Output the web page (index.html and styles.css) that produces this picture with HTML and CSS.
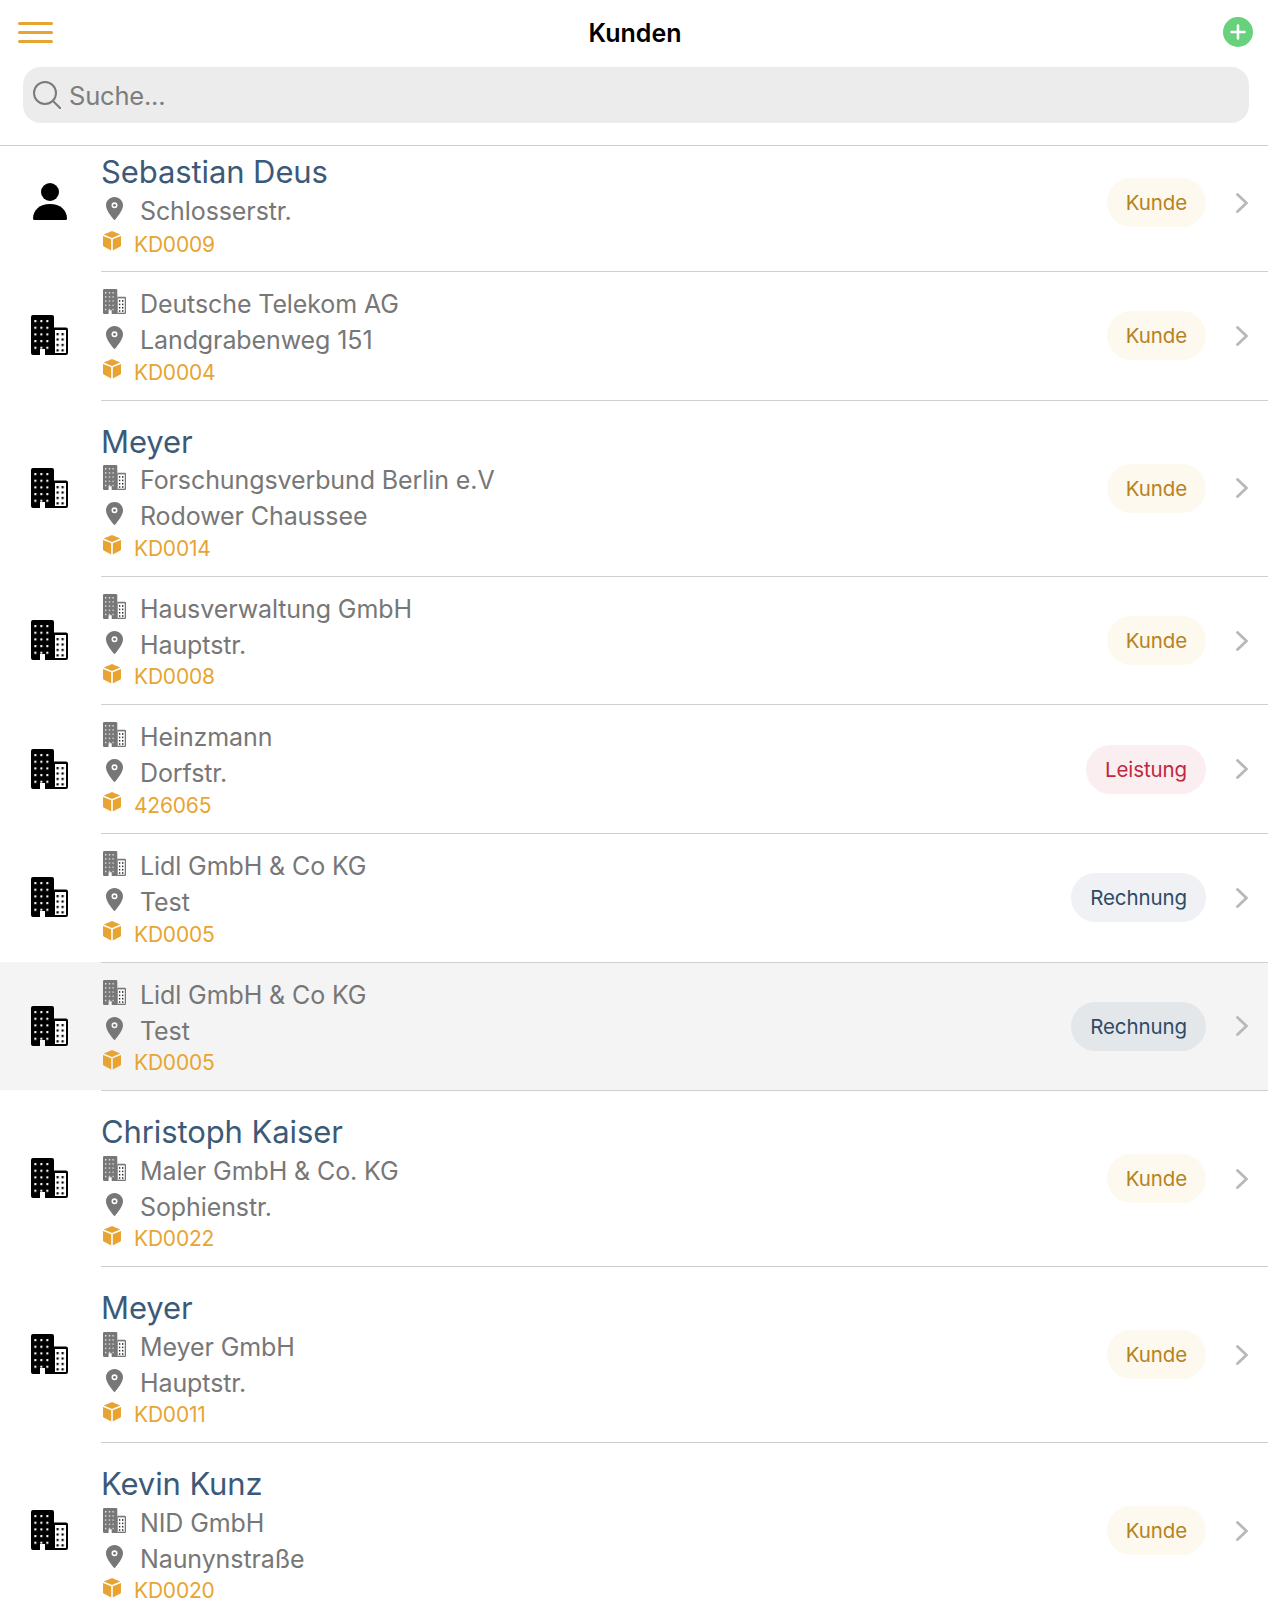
FILE: index.html
```html
<!DOCTYPE html>
<html lang="de">
<head>
<meta charset="utf-8">
<title>Kunden</title>
<link rel="stylesheet" href="styles.css">
</head>
<body>
<svg class="sprite" aria-hidden="true">
  <defs>
    <pattern id="win-a" x="3.300" y="5" width="6" height="6.670" patternUnits="userSpaceOnUse"><rect width="2.100" height="2.100" rx=".5" fill="#fff"/></pattern>
    <pattern id="win-b" x="25.500" y="18" width="5" height="5.400" patternUnits="userSpaceOnUse"><rect width="2.200" height="2.200" rx=".5" fill="#000"/></pattern>
    <symbol id="i-building" viewBox="0 0 37 40">
      <path d="M2 0h19a2 2 0 0 1 2 2v38h-9v-6h-5v6H2a2 2 0 0 1-2-2V2a2 2 0 0 1 2-2z"/>
      <path d="M23 12.500h12a2 2 0 0 1 2 2V38a2 2 0 0 1-2 2H23z"/>
      <rect x="24" y="15" width="11" height="23" fill="#fff"/>
      <rect x="3" y="4" width="15" height="31" fill="url(#win-a)"/>
      <rect x="24" y="16.500" width="11" height="21" fill="url(#win-b)"/>
    </symbol>
    <symbol id="i-person" viewBox="0 0 34 37">
      <circle cx="17" cy="9" r="9"/>
      <path d="M1.500 37C.5 37 0 36.400 0 35.500 0 27 7 21 17 21s17 6 17 14.500c0 .9-.5 1.500-1.500 1.500z"/>
    </symbol>
    <symbol id="i-pin" viewBox="0 0 17 23">
      <path fill-rule="evenodd" d="M8.500 0C3.800 0 0 3.700 0 8.300 0 13.500 5.500 19.500 7.700 22.500c.4.600 1.200.6 1.600 0C11.500 19.500 17 13.500 17 8.300 17 3.700 13.200 0 8.500 0zm0 5.300a3 3 0 1 1 0 6 3 3 0 0 1 0-6z"/>
      <circle cx="8.500" cy="8.300" r="1.400"/>
    </symbol>
    <symbol id="i-cube" viewBox="0 0 18 20">
      <path d="M9 0 .8 3.400 9 6.900l8.200-3.500z"/>
      <path d="M0 4.900v9.600c0 .4.200.7.600.9L8.200 19.600V8.300z"/>
      <path d="M18 4.900v9.600c0 .4-.2.700-.6.900L9.800 19.600V8.300z"/>
    </symbol>
  </defs>
</svg>

<div class="page">
  <header class="top">
    <div class="bar">
      <button class="menu" aria-label="Menü"><span></span><span></span><span></span></button>
      <h1>Kunden</h1>
      <button class="add" aria-label="Neu">
        <svg viewBox="0 0 30 30"><path d="M15 8.500v13M8.500 15h13"/></svg>
      </button>
    </div>
    <div class="search">
      <svg viewBox="0 0 28 28"><circle cx="12" cy="12" r="11"/><path d="M20 20l7.500 7.500"/></svg>
      <span>Suche...</span>
    </div>
  </header>

  <ul class="list">
    <li class="row person">
      <div class="lead"><svg class="i-big-person"><use href="#i-person"/></svg></div>
      <div class="body">
        <div class="text">
          <div class="name">Sebastian Deus</div>
          <div class="line"><svg class="i-pin"><use href="#i-pin"/></svg>Schlosserstr.</div>
          <div class="code"><svg class="i-cube"><use href="#i-cube"/></svg>KD0009</div>
        </div>
        <span class="pill kunde">Kunde</span>
        <svg class="chev" viewBox="0 0 12 20"><path d="M1.500 1.500 10.500 10l-9 8.500"/></svg>
      </div>
    </li>
    <li class="row">
      <div class="lead"><svg class="i-big"><use href="#i-building"/></svg></div>
      <div class="body">
        <div class="text">
          <div class="line"><svg class="i-small"><use href="#i-building"/></svg>Deutsche Telekom AG</div>
          <div class="line"><svg class="i-pin"><use href="#i-pin"/></svg>Landgrabenweg 151</div>
          <div class="code"><svg class="i-cube"><use href="#i-cube"/></svg>KD0004</div>
        </div>
        <span class="pill kunde">Kunde</span>
        <svg class="chev" viewBox="0 0 12 20"><path d="M1.500 1.500 10.500 10l-9 8.500"/></svg>
      </div>
    </li>
    <li class="row">
      <div class="lead"><svg class="i-big"><use href="#i-building"/></svg></div>
      <div class="body">
        <div class="text">
          <div class="name">Meyer</div>
          <div class="line"><svg class="i-small"><use href="#i-building"/></svg>Forschungsverbund Berlin e.V</div>
          <div class="line"><svg class="i-pin"><use href="#i-pin"/></svg>Rodower Chaussee</div>
          <div class="code"><svg class="i-cube"><use href="#i-cube"/></svg>KD0014</div>
        </div>
        <span class="pill kunde">Kunde</span>
        <svg class="chev" viewBox="0 0 12 20"><path d="M1.500 1.500 10.500 10l-9 8.500"/></svg>
      </div>
    </li>
    <li class="row">
      <div class="lead"><svg class="i-big"><use href="#i-building"/></svg></div>
      <div class="body">
        <div class="text">
          <div class="line"><svg class="i-small"><use href="#i-building"/></svg>Hausverwaltung GmbH</div>
          <div class="line"><svg class="i-pin"><use href="#i-pin"/></svg>Hauptstr.</div>
          <div class="code"><svg class="i-cube"><use href="#i-cube"/></svg>KD0008</div>
        </div>
        <span class="pill kunde">Kunde</span>
        <svg class="chev" viewBox="0 0 12 20"><path d="M1.500 1.500 10.500 10l-9 8.500"/></svg>
      </div>
    </li>
    <li class="row">
      <div class="lead"><svg class="i-big"><use href="#i-building"/></svg></div>
      <div class="body">
        <div class="text">
          <div class="line"><svg class="i-small"><use href="#i-building"/></svg>Heinzmann</div>
          <div class="line"><svg class="i-pin"><use href="#i-pin"/></svg>Dorfstr.</div>
          <div class="code"><svg class="i-cube"><use href="#i-cube"/></svg>426065</div>
        </div>
        <span class="pill leistung">Leistung</span>
        <svg class="chev" viewBox="0 0 12 20"><path d="M1.500 1.500 10.500 10l-9 8.500"/></svg>
      </div>
    </li>
    <li class="row">
      <div class="lead"><svg class="i-big"><use href="#i-building"/></svg></div>
      <div class="body">
        <div class="text">
          <div class="line"><svg class="i-small"><use href="#i-building"/></svg>Lidl GmbH &amp; Co KG</div>
          <div class="line"><svg class="i-pin"><use href="#i-pin"/></svg>Test</div>
          <div class="code"><svg class="i-cube"><use href="#i-cube"/></svg>KD0005</div>
        </div>
        <span class="pill rechnung">Rechnung</span>
        <svg class="chev" viewBox="0 0 12 20"><path d="M1.500 1.500 10.500 10l-9 8.500"/></svg>
      </div>
    </li>
    <li class="row active">
      <div class="lead"><svg class="i-big"><use href="#i-building"/></svg></div>
      <div class="body">
        <div class="text">
          <div class="line"><svg class="i-small"><use href="#i-building"/></svg>Lidl GmbH &amp; Co KG</div>
          <div class="line"><svg class="i-pin"><use href="#i-pin"/></svg>Test</div>
          <div class="code"><svg class="i-cube"><use href="#i-cube"/></svg>KD0005</div>
        </div>
        <span class="pill rechnung">Rechnung</span>
        <svg class="chev" viewBox="0 0 12 20"><path d="M1.500 1.500 10.500 10l-9 8.500"/></svg>
      </div>
    </li>
    <li class="row">
      <div class="lead"><svg class="i-big"><use href="#i-building"/></svg></div>
      <div class="body">
        <div class="text">
          <div class="name">Christoph Kaiser</div>
          <div class="line"><svg class="i-small"><use href="#i-building"/></svg>Maler GmbH &amp; Co. KG</div>
          <div class="line"><svg class="i-pin"><use href="#i-pin"/></svg>Sophienstr.</div>
          <div class="code"><svg class="i-cube"><use href="#i-cube"/></svg>KD0022</div>
        </div>
        <span class="pill kunde">Kunde</span>
        <svg class="chev" viewBox="0 0 12 20"><path d="M1.500 1.500 10.500 10l-9 8.500"/></svg>
      </div>
    </li>
    <li class="row">
      <div class="lead"><svg class="i-big"><use href="#i-building"/></svg></div>
      <div class="body">
        <div class="text">
          <div class="name">Meyer</div>
          <div class="line"><svg class="i-small"><use href="#i-building"/></svg>Meyer GmbH</div>
          <div class="line"><svg class="i-pin"><use href="#i-pin"/></svg>Hauptstr.</div>
          <div class="code"><svg class="i-cube"><use href="#i-cube"/></svg>KD0011</div>
        </div>
        <span class="pill kunde">Kunde</span>
        <svg class="chev" viewBox="0 0 12 20"><path d="M1.500 1.500 10.500 10l-9 8.500"/></svg>
      </div>
    </li>
    <li class="row">
      <div class="lead"><svg class="i-big"><use href="#i-building"/></svg></div>
      <div class="body">
        <div class="text">
          <div class="name">Kevin Kunz</div>
          <div class="line"><svg class="i-small"><use href="#i-building"/></svg>NID GmbH</div>
          <div class="line"><svg class="i-pin"><use href="#i-pin"/></svg>Naunynstraße</div>
          <div class="code"><svg class="i-cube"><use href="#i-cube"/></svg>KD0020</div>
        </div>
        <span class="pill kunde">Kunde</span>
        <svg class="chev" viewBox="0 0 12 20"><path d="M1.500 1.500 10.500 10l-9 8.500"/></svg>
      </div>
    </li>
  </ul>
</div>
</body>
</html>
```

FILE: styles.css
```css
* { box-sizing: border-box; }
html, body { margin: 0; padding: 0; background: #fff; }
body { font-family: Inter, "Liberation Sans", sans-serif; color: #000; }
.sprite { position: absolute; width: 0; height: 0; }
.page { height: 1606px; overflow: hidden; }

.top { border-bottom: 1px solid #cfcfcf; height: 146px; padding: 17px 15px 0 18px; }
.bar { display: flex; align-items: center; justify-content: space-between; height: 30px; }
.bar h1 { margin: 2px 6px 0 0; font-size: 25px; font-weight: 600; line-height: 30px; }
.menu { width: 35px; height: 21px; padding: 0; border: 0; background: none; display: flex; flex-direction: column; justify-content: space-between; }
.menu span { display: block; height: 3px; border-radius: 2px; background: #e8a433; }
.add { width: 30px; height: 30px; padding: 0; border: 0; border-radius: 50%; background: #68d17c; }
.add svg { display: block; width: 30px; height: 30px; fill: none; stroke: #fff; stroke-width: 2.600; stroke-linecap: round; }

.search { display: flex; align-items: center; gap: 8px; height: 56px; margin: 20px 4px 0 5px; padding-left: 10px; border-radius: 18px; background: #ececec; color: #7d7d7d; font-size: 25.500px; letter-spacing: -.2px; }
.search svg { width: 28px; height: 28px; fill: none; stroke: #7a7a7a; stroke-width: 2; stroke-linecap: round; }

.list { margin: 0; padding: 0; list-style: none; }
.row { display: flex; }
.row.active { background: #f4f4f4; }
.lead { width: 101px; flex: none; display: flex; align-items: center; padding-left: 31px; }
.row.person .lead { padding-left: 33px; padding-bottom: 14px; }
.i-big { width: 37px; height: 40px; fill: #000; }
.i-big-person { width: 34px; height: 37px; fill: #000; }
.body { flex: 1; min-width: 0; display: flex; align-items: center; border-top: 1px solid #cfcfcf; padding-right: 20px; }
.row.person .body { border-top: 0; padding-bottom: 12px; }
.text { flex: 1; min-width: 0; padding: 14px 0 13.600px; }
.row.person .text { padding: 5px 0 1.200px; }
.name { height: 41.500px; margin-top: 6px; font-size: 31px; line-height: 41.500px; letter-spacing: -.1px; color: #3c5a78; white-space: nowrap; }
.row.person .name { margin-top: 0; }
.line { display: flex; align-items: center; height: 36px; font-size: 25px; letter-spacing: -.1px; color: #777; white-space: nowrap; }
.line svg { flex: none; fill: #777; }
.i-small { width: 23px; height: 25px; margin: -5px 14px 0 2px; }
.i-pin { width: 17px; height: 23px; margin: -5px 17px 0 5px; }
.code { display: flex; align-items: center; height: 28px; font-size: 21px; letter-spacing: -.2px; color: #e8a433; white-space: nowrap; }
.row.person .code { margin-top: 1.500px; }
.i-cube { flex: none; width: 18px; height: 20px; margin: -6px 13px 0 2px; fill: #e8a433; }

.pill { flex: none; height: 49px; padding: 0 19px; margin-right: 30px; border-radius: 25px; font-size: 20.500px; letter-spacing: -.1px; line-height: 49px; }
.kunde { background: #fdf9ef; color: #b8821f; }
.leistung { background: #fbeef1; color: #c0283e; }
.rechnung { background: #eff1f4; color: #2e4b66; }
.active .rechnung { background: #e4e7ea; }
.chev { flex: none; width: 12px; height: 20px; fill: none; stroke: #b8b8b8; stroke-width: 2.800; stroke-linecap: round; stroke-linejoin: round; }
```
